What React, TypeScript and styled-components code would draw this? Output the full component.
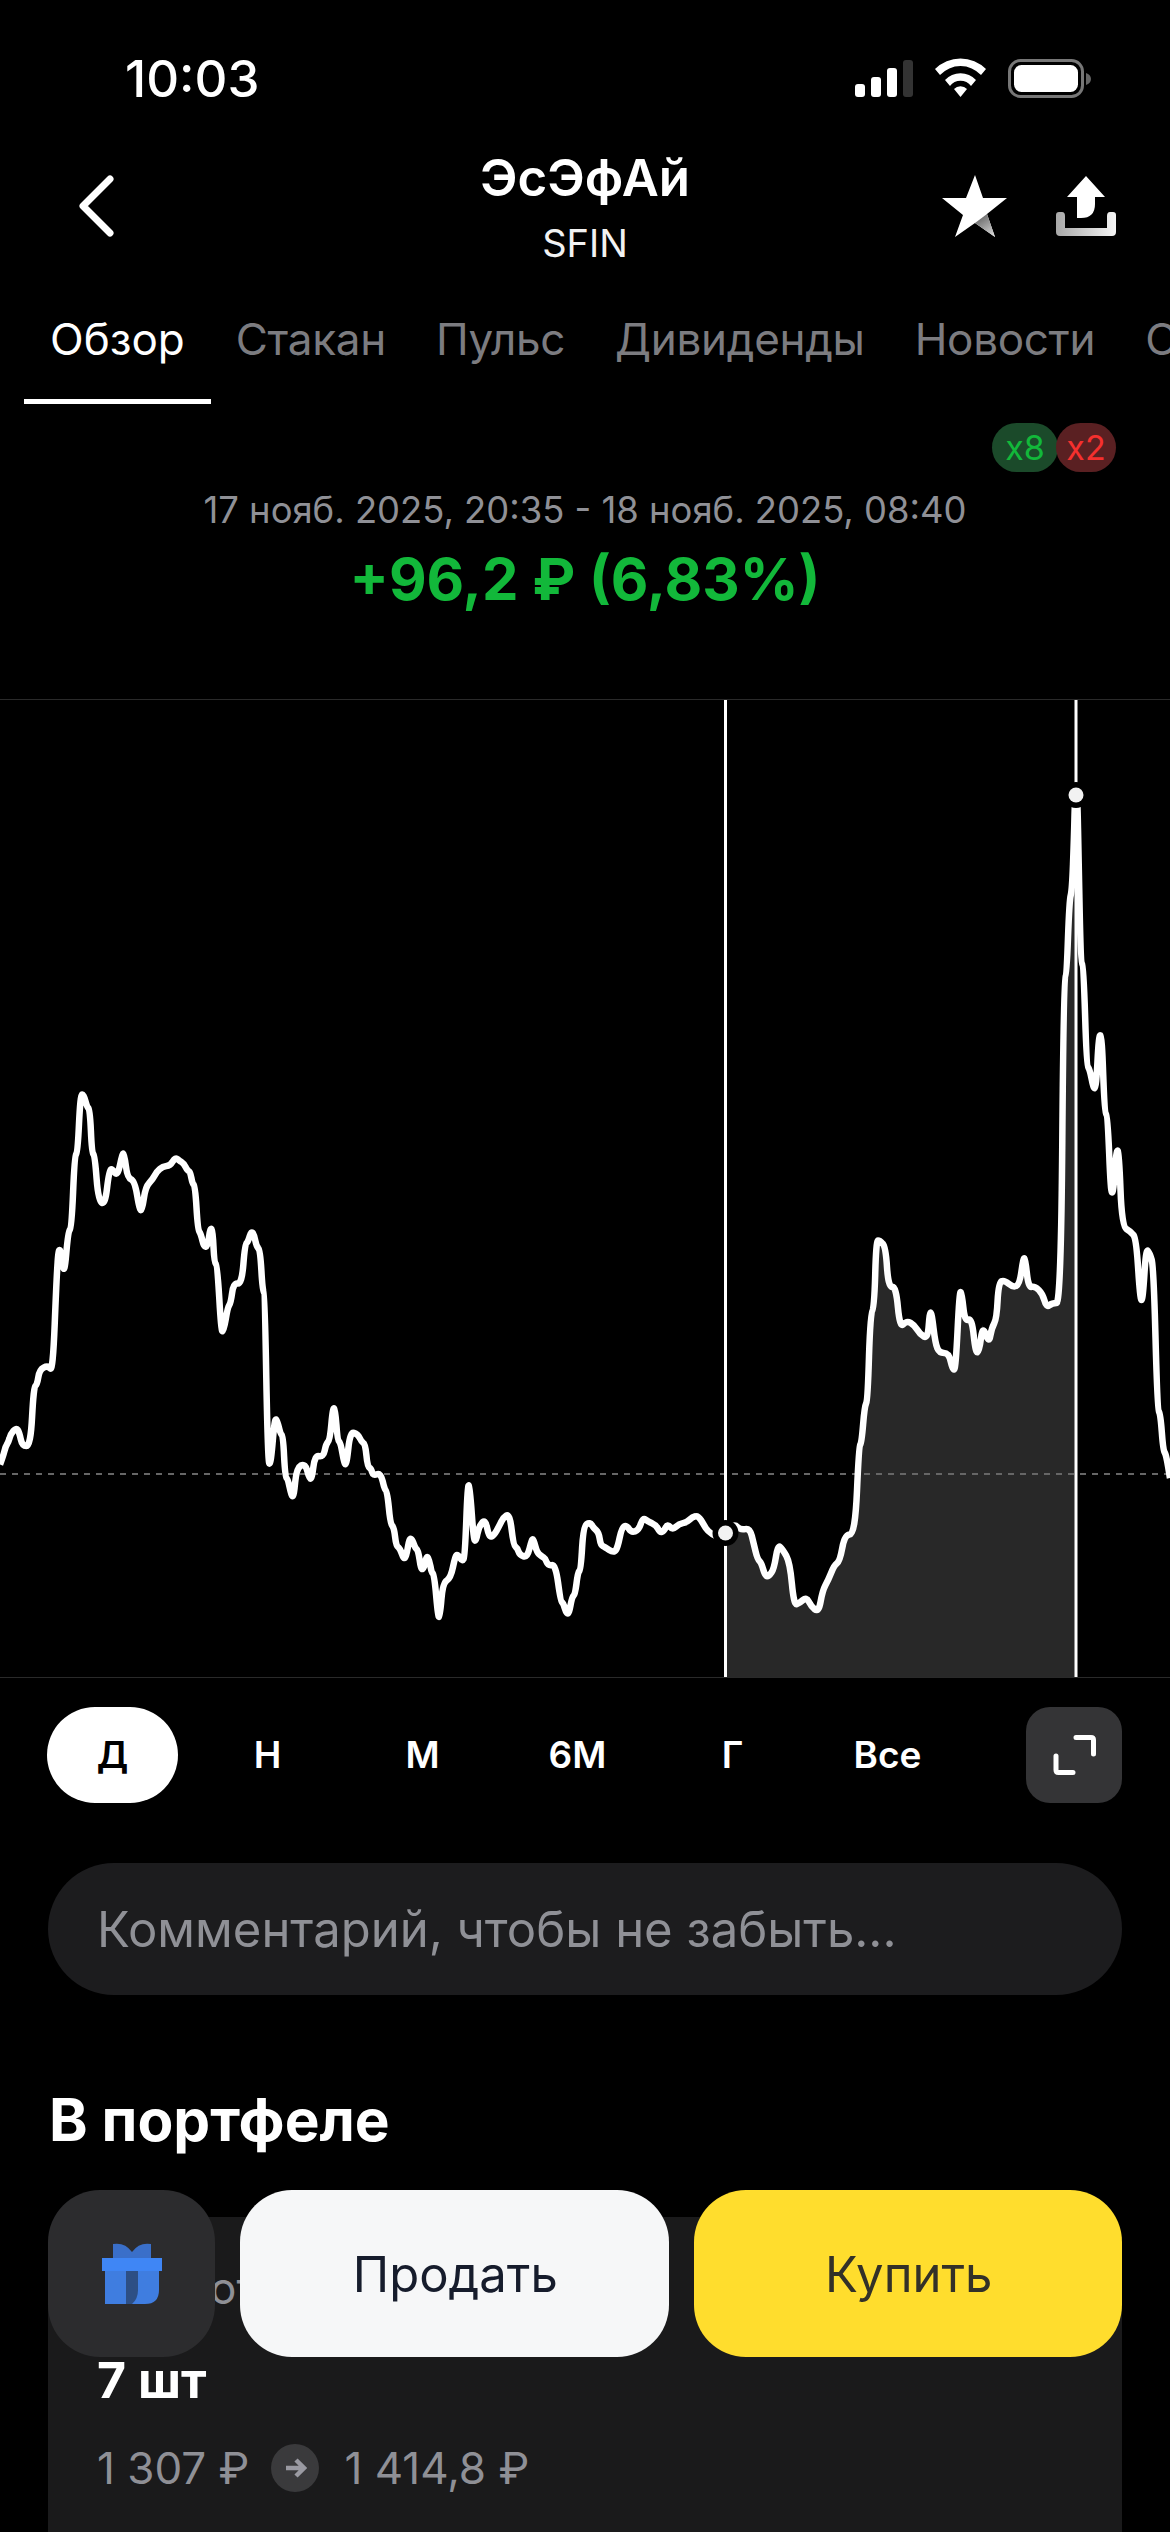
import React from 'react';
import styled, {createGlobalStyle} from 'styled-components';

const GlobalStyle = createGlobalStyle`
    html, body {
        margin: 0;
        padding: 0;
        background: #000;
    }
    body {
        font-family: Inter, "Noto Sans", "Liberation Sans", sans-serif;
        color: #fff;
    }
`;

const green = '#12b83a';
const red = '#f5302e';
const grey = '#8f9096';

const Screen = styled.div`
    position: relative;
    width: 1170px;
    height: 2532px;
    overflow: hidden;
    background: #000;
`;

const StatusBar = styled.div`
    height: 146px;
    padding: 10px 79px 0 125px;
    box-sizing: border-box;
    display: flex;
    justify-content: space-between;
    align-items: center;
`;

const Time = styled.div`
    font-size: 51px;
    font-weight: 500;
`;

const Header = styled.header`
    height: 124px;
    padding: 0 54px;
    display: grid;
    grid-template-columns: 1fr auto 1fr;
    align-items: center;
`;

const BackSlot = styled.div`
    padding-left: 24px;
    margin-top: -4px;
    display: flex;
`;

const HeaderIcons = styled.div`
    display: flex;
    justify-content: flex-end;
    gap: 48px;
    align-items: center;
    margin-top: -4px;
`;

const TitleBlock = styled.div`
    display: flex;
    flex-direction: column;
    align-items: center;
`;

const Title = styled.div`
    font-size: 51px;
    font-weight: 600;
    line-height: 58px;
`;

const Ticker = styled.div`
    font-size: 38px;
    line-height: 50px;
    margin-top: 11px;
    color: #f2f2f2;
`;

const Tabs = styled.nav`
    height: 134px;
    padding-left: 24px;
    display: flex;
    overflow: hidden;
`;

const Tab = styled.div<{$active?: boolean}>`
    padding: 9px ${props => (props.$active ? 26 : 25)}px 0;
    flex: none;
    display: flex;
    align-items: center;
    box-sizing: border-box;
    font-size: 44px;
    letter-spacing: ${props => (props.$active ? 0 : -0.3)}px;
    color: ${props => (props.$active ? '#fff' : '#7c7c80')};
    border-bottom: 5px solid ${props => (props.$active ? '#fff' : 'transparent')};
`;

const BadgeRow = styled.div`
    display: flex;
    justify-content: flex-end;
    box-sizing: border-box;
    padding: 19px 54px 0 0;
    height: 76px;
`;

const Badge = styled.div<{$kind: 'up' | 'down'}>`
    height: 49px;
    width: ${props => (props.$kind === 'up' ? 66 : 60)}px;
    margin-left: ${props => (props.$kind === 'up' ? 0 : -2)}px;
    border-radius: 25px;
    display: flex;
    align-items: center;
    justify-content: center;
    font-size: 34px;
    background: ${props => (props.$kind === 'up' ? '#1b4a2a' : '#5a2022')};
    color: ${props => (props.$kind === 'up' ? green : red)};
`;

const Period = styled.div`
    text-align: center;
    font-size: 36.4px;
    line-height: 44px;
    margin-top: 8px;
    color: ${grey};
`;

const Change = styled.div`
    text-align: center;
    font-size: 58px;
    font-weight: 700;
    line-height: 70px;
    margin-top: 12px;
    color: ${green};
`;

const ChartFrame = styled.div`
    margin-top: 85px;
    height: 979px;
    box-sizing: border-box;
    border-top: 1px solid #2a2a2a;
    border-bottom: 1px solid #2a2a2a;

    svg {
        display: block;
    }
`;

const Ranges = styled.div`
    margin-top: 29px;
    padding: 0 48px 0 35px;
    display: flex;
    align-items: center;
    height: 96px;
`;

const RangeItem = styled.div<{$active?: boolean}>`
    width: 155px;
    flex: none;
    display: flex;
    justify-content: center;
    font-size: 37px;
    font-weight: 600;
    line-height: 96px;
    color: ${props => (props.$active ? '#000' : '#fff')};

    span {
        width: 131px;
        text-align: center;
        border-radius: 48px;
        background: ${props => (props.$active ? '#fff' : 'transparent')};
    }
`;

const ExpandButton = styled.div`
    margin-left: auto;
    width: 96px;
    height: 96px;
    border-radius: 24px;
    background: #343436;
    display: flex;
    align-items: center;
    justify-content: center;
`;

const CommentField = styled.div`
    margin: 60px 48px 0;
    height: 132px;
    border-radius: 66px;
    background: #1c1c1e;
    padding-left: 49px;
    display: flex;
    align-items: center;
    font-size: 49px;
    color: ${grey};
`;

const SectionTitle = styled.h2`
    margin: 91px 0 0 49px;
    font-size: 58.5px;
    line-height: 68px;
    font-weight: 700;
`;

const PortfolioCard = styled.section`
    margin: 63px 48px 0;
    padding: 45px 49px 0;
    height: 400px;
    border-radius: 32px 32px 0 0;
    background: #1a1a1b;
`;

const CardLabel = styled.div`
    font-size: 44px;
    line-height: 52px;
    color: ${grey};
`;

const Quantity = styled.div`
    margin-top: 36px;
    font-size: 50px;
    font-weight: 700;
    line-height: 60px;
`;

const PriceRow = styled.div`
    margin-top: 34px;
    display: flex;
    align-items: center;
    gap: 22px;
    font-size: 44px;
    line-height: 48px;
    color: ${grey};
`;

const ArrowCircle = styled.div`
    width: 48px;
    height: 48px;
    margin-right: 3px;
    border-radius: 50%;
    background: #3a3a3c;
    display: flex;
    align-items: center;
    justify-content: center;
`;

const ActionBar = styled.div`
    position: absolute;
    left: 48px;
    right: 48px;
    top: 2190px;
    height: 167px;
    display: flex;
    gap: 25px;
`;

const GiftButton = styled.div`
    width: 167px;
    flex: none;
    border-radius: 52px;
    background: #2c2c2e;
    display: flex;
    align-items: center;
    justify-content: center;
`;

const ActionButton = styled.div<{$primary?: boolean}>`
    flex: 1;
    border-radius: 52px;
    padding: 2px 0 0 2px;
    display: flex;
    align-items: center;
    justify-content: center;
    font-size: 49px;
    background: ${props => (props.$primary ? '#ffdd2d' : '#f6f7f8')};
    color: ${props => (props.$primary ? '#333128' : '#161c2c')};
`;

// line traced from the reference, in crop coordinates of the two chart crops
const LEFT_TRACE = [
    [0, 1040], [8, 1020], [15, 995], [22, 985], [28, 965], [42, 950], [50, 960], [58, 995], [80, 995], [88, 850],
    [97, 845], [103, 808], [125, 797], [138, 813], [148, 580], [153, 510], [160, 520], [168, 580], [178, 470],
    [187, 460], [195, 285], [203, 275], [210, 135], [218, 132], [228, 165], [235, 170], [240, 275], [248, 285],
    [257, 395], [275, 403], [285, 320], [293, 315], [307, 335], [320, 277], [325, 280], [333, 338], [352, 345],
    [365, 418], [372, 415], [380, 360], [400, 340], [410, 322], [425, 310], [445, 308], [458, 287], [470, 297],
    [480, 302], [490, 320], [497, 322], [503, 352], [510, 357], [517, 465], [525, 475], [533, 508], [543, 505],
    [550, 458], [556, 470], [560, 545], [568, 552], [578, 715], [585, 712], [595, 655], [603, 645], [610, 595],
    [632, 598], [640, 500], [648, 495], [657, 467], [665, 480], [670, 505], [680, 515], [686, 615], [692, 620],
    [700, 1038], [708, 1038], [718, 925], [725, 935], [733, 965], [740, 970], [745, 1070], [752, 1075], [762, 1118],
    [768, 1118], [775, 1048], [798, 1037], [808, 1075], [815, 1075], [823, 1017], [845, 1022], [852, 990], [862, 980],
    [870, 900], [876, 905], [882, 980], [890, 987], [900, 1040], [906, 1038], [915, 960], [935, 965], [945, 985],
    [955, 990], [960, 1045], [970, 1050], [975, 1068], [995, 1060], [1005, 1102], [1012, 1105], [1020, 1185],
    [1030, 1195], [1035, 1240], [1045, 1245], [1055, 1272], [1062, 1265], [1070, 1220], [1078, 1225], [1085, 1245],
    [1093, 1250], [1100, 1297], [1108, 1295], [1115, 1262], [1122, 1275], [1128, 1305], [1135, 1310], [1145, 1415],
    [1150, 1412], [1157, 1330], [1178, 1318], [1190, 1262], [1198, 1262], [1208, 1278], [1215, 1265], [1222, 1088],
    [1228, 1095], [1238, 1228], [1245, 1225], [1250, 1195], [1268, 1172], [1278, 1218], [1290, 1215], [1305, 1190],
    [1315, 1170], [1332, 1160], [1342, 1238], [1352, 1245], [1358, 1262], [1378, 1268], [1390, 1222], [1395, 1225],
    [1403, 1255], [1415, 1265], [1425, 1270], [1432, 1288], [1452, 1285], [1465, 1375], [1472, 1380], [1480, 1405],
    [1487, 1405], [1495, 1365], [1503, 1358], [1510, 1305], [1518, 1297]
];

const RIGHT_TRACE = [
    [35, 1322], [52, 1315], [62, 1325], [75, 1332], [80, 1352], [90, 1355], [115, 1365], [125, 1355], [135, 1325],
    [148, 1320], [160, 1332], [180, 1328], [190, 1308], [205, 1315], [225, 1320], [235, 1332], [245, 1330], [255, 1318],
    [268, 1328], [285, 1318], [305, 1316], [320, 1307], [335, 1305], [350, 1320], [360, 1330], [385, 1340], [405, 1332],
    [430, 1318], [445, 1328], [470, 1325], [480, 1350], [490, 1375], [500, 1380], [510, 1402], [520, 1402], [533, 1390],
    [543, 1352], [555, 1358], [575, 1380], [585, 1448], [600, 1445], [618, 1435], [630, 1450], [650, 1460], [660, 1425],
    [675, 1408], [690, 1385], [705, 1378], [718, 1335], [745, 1335], [755, 1195], [762, 1188], [770, 1130], [778, 1120],
    [785, 980], [795, 975], [800, 865], [810, 865], [825, 875], [832, 940], [852, 938], [862, 1005], [880, 993],
    [900, 1000], [915, 1015], [935, 1022], [940, 980], [945, 980], [955, 1030], [965, 1045], [990, 1045], [1000, 1072],
    [1008, 1070], [1018, 945], [1024, 950], [1032, 995], [1050, 988], [1060, 1045], [1070, 1042], [1078, 1000],
    [1095, 1030], [1102, 1005], [1115, 990], [1120, 932], [1135, 928], [1158, 940], [1175, 935], [1185, 892], [1190, 895],
    [1198, 940], [1215, 938], [1235, 950], [1245, 972], [1260, 965], [1283, 965], [1290, 445], [1298, 440], [1305, 320],
    [1312, 305], [1317, 220], [1320, 150], [1326, 150], [1329, 260], [1335, 420], [1342, 425], [1350, 585], [1358, 590],
    [1368, 622], [1375, 620], [1382, 535], [1390, 538], [1397, 660], [1405, 665], [1413, 788], [1420, 788], [1428, 718],
    [1435, 725], [1442, 842], [1465, 850], [1480, 862], [1490, 960], [1497, 960], [1505, 878], [1515, 885], [1525, 905],
    [1535, 1135], [1543, 1142], [1550, 1200], [1558, 1208], [1568, 1245]
];

const CHART_TOP = 700;
const INNER_HEIGHT = 977;
const RANGE_START = 725.5;
const RANGE_END = 1076;
const START_DOT_Y = 833;
const END_DOT_Y = 95;

const linePoints = [
    ...LEFT_TRACE.map(([x, y]) => [x / 2.6133, 1040 + y / 2.45 - CHART_TOP]),
    ...RIGHT_TRACE.map(([x, y]) => [570 + x / 2.6133, 700 + y / 1.6 - CHART_TOP])
];

const toPolygon = (points: number[][]) => points.map(([x, y]) => `${x.toFixed(1)},${y.toFixed(1)}`).join(' ');

// rounds the corners by curving through the midpoints of the segments
function toSmoothPath(points: number[][]) {
    let path = `M${points[0][0].toFixed(1)} ${points[0][1].toFixed(1)}`;
    for (let i = 1; i < points.length - 1; i++) {
        const [x, y] = points[i];
        const [nx, ny] = points[i + 1];
        path += ` Q${x.toFixed(1)} ${y.toFixed(1)} ${((x + nx) / 2).toFixed(1)} ${((y + ny) / 2).toFixed(1)}`;
    }
    const last = points[points.length - 1];
    return `${path} L${last[0].toFixed(1)} ${last[1].toFixed(1)}`;
}

const areaPoints = [
    [RANGE_START, INNER_HEIGHT],
    [RANGE_START, START_DOT_Y],
    ...linePoints.filter(([x]) => x >= RANGE_START && x <= RANGE_END),
    [RANGE_END, END_DOT_Y],
    [RANGE_END, INNER_HEIGHT]
];

const Chart = () => (
    <svg width={1170} height={INNER_HEIGHT} viewBox={`0 0 1170 ${INNER_HEIGHT}`}>
        <polygon points={toPolygon(areaPoints)} fill="#282828" />
        <line x1={0} x2={1170} y1={774} y2={774} stroke="#666" strokeWidth={2} strokeDasharray="6 6" />
        <line x1={RANGE_START} x2={RANGE_START} y1={0} y2={INNER_HEIGHT} stroke="#fff" strokeWidth={3} />
        <line x1={RANGE_END} x2={RANGE_END} y1={0} y2={INNER_HEIGHT} stroke="#fff" strokeWidth={3} />
        <path d={toSmoothPath(linePoints)} fill="none" stroke="#fff" strokeWidth={6.5} strokeLinejoin="round" />
        <circle cx={RANGE_START} cy={START_DOT_Y} r={13} fill="#000" />
        <circle cx={RANGE_START} cy={START_DOT_Y} r={7.5} fill="#f2f2f2" />
        <circle cx={RANGE_END} cy={END_DOT_Y} r={13} fill="#000" />
        <circle cx={RANGE_END} cy={END_DOT_Y} r={7.5} fill="#f2f2f2" />
    </svg>
);

const StatusIcons = () => (
    <svg width={236} height={40} viewBox="0 0 236 40">
        <rect x={0} y={26} width={10} height={13} rx={3} fill="#fff" />
        <rect x={16} y={19} width={10} height={20} rx={3} fill="#fff" />
        <rect x={32} y={10} width={10} height={29} rx={3} fill="#fff" />
        <rect x={48} y={2} width={10} height={37} rx={3} fill="#333" />
        <path d="M80 11 A36 36 0 0 1 131 11 L126 17 A28 28 0 0 0 85 17 Z" fill="#fff" />
        <path d="M90 22 A21 21 0 0 1 121 22 L116 28 A13 13 0 0 0 95 28 Z" fill="#fff" />
        <path d="M99 31 A9 9 0 0 1 112 31 L105.5 39 Z" fill="#fff" />
        <rect x={154.5} y={2.5} width={73} height={36} rx={11} fill="none" stroke="#777" strokeWidth={3} />
        <rect x={159} y={7} width={64} height={27} rx={7.5} fill="#fff" />
        <path d="M231 15 C234 16 236 18 236 21 C236 24 234 26 231 27 Z" fill="#666" />
    </svg>
);

const BackIcon = () => (
    <svg width={36} height={62} viewBox="0 0 36 62">
        <path d="M32 4 L5 31 L32 58" fill="none" stroke="#fff" strokeWidth={7} strokeLinecap="round" strokeLinejoin="round" />
    </svg>
);

const StarIcon = () => (
    <svg width={66} height={62} viewBox="0 0 66 62">
        <defs>
            <linearGradient id="starShade" x1="0.2" y1="0" x2="0.8" y2="1">
                <stop offset="0" stopColor="#5e5e5e" />
                <stop offset="1" stopColor="#d6d6d6" />
            </linearGradient>
        </defs>
        <path d="M33 0 L41 23 L65 23 L45 39 L53 62 L33 48 L13 62 L21 40 L0 23 L24 23 Z" fill="#fff" />
        <path d="M33 48 L45 39 L53 62 Z" fill="url(#starShade)" />
    </svg>
);

const ShareIcon = () => (
    <svg width={60} height={60} viewBox="0 0 60 60">
        <defs>
            <linearGradient id="trayShade" x1="0" y1="0" x2="1" y2="0">
                <stop offset="0" stopColor="#a8a8a8" />
                <stop offset="1" stopColor="#f5f5f5" />
            </linearGradient>
        </defs>
        <path
            d="M0 39 Q0 36 3 36 L6 36 Q9 36 9 40 L9 52 L51 52 L51 40 Q51 36 54 36 L57 36 Q60 36 60 39 L60 56 Q60 60 56 60 L4 60 Q0 60 0 56 Z"
            fill="url(#trayShade)"
        />
        <path d="M30 0 L49 21 L39 21 L39 28 Q39 42 25 42 L21 42 L21 21 L11 21 Z" fill="#fff" />
    </svg>
);

const ExpandIcon = () => (
    <svg width={44} height={44} viewBox="0 0 44 44">
        <path
            d="M24 4.5 L39 4.5 Q41.5 4.5 41.5 7 L41.5 21 M4 23 L4 37 Q4 39.5 6.5 39.5 L21 39.5"
            fill="none"
            stroke="#fff"
            strokeWidth={5}
            strokeLinecap="round"
        />
    </svg>
);

const GiftIcon = () => (
    <svg width={60} height={61} viewBox="0 0 60 61">
        <path d="M11 1 Q23 -1 30 9 Q37 -1 49 1 L49 16 L11 16 Z" fill="#3a6fc9" />
        <path d="M3 28 L57 28 L57 47 Q57 61 43 61 L3 61 Z" fill="#3f7de0" />
        <path d="M24 28 L36 28 L36 47 Q36 56 30 61 L24 61 Z" fill="#2d4f85" />
        <rect x={0} y={15} width={60} height={13} fill="#3f86f5" />
    </svg>
);

const ArrowIcon = () => (
    <svg width={24} height={24} viewBox="0 0 24 24">
        <path d="M3 12 L20 12 M13 4 L21 12 L13 20" fill="none" stroke="#9a9aa2" strokeWidth={4.5} />
    </svg>
);

const TABS = ['Обзор', 'Стакан', 'Пульс', 'Дивиденды', 'Новости', 'События'];
const RANGES = ['Д', 'Н', 'М', '6М', 'Г', 'Все'];

export default function App() {
    return (
        <Screen>
            <GlobalStyle />
            <StatusBar>
                <Time>10:03</Time>
                <StatusIcons />
            </StatusBar>
            <Header>
                <BackSlot>
                    <BackIcon />
                </BackSlot>
                <TitleBlock>
                    <Title>ЭсЭфАй</Title>
                    <Ticker>SFIN</Ticker>
                </TitleBlock>
                <HeaderIcons>
                    <StarIcon />
                    <ShareIcon />
                </HeaderIcons>
            </Header>
            <Tabs>
                {TABS.map((tab, index) => (
                    <Tab key={tab} $active={index === 0}>
                        {tab}
                    </Tab>
                ))}
            </Tabs>
            <BadgeRow>
                <Badge $kind="up">x8</Badge>
                <Badge $kind="down">x2</Badge>
            </BadgeRow>
            <Period>17 нояб. 2025, 20:35 - 18 нояб. 2025, 08:40</Period>
            <Change>+96,2 ₽ (6,83%)</Change>
            <ChartFrame>
                <Chart />
            </ChartFrame>
            <Ranges>
                {RANGES.map((range, index) => (
                    <RangeItem key={range} $active={index === 0}>
                        <span>{range}</span>
                    </RangeItem>
                ))}
                <ExpandButton>
                    <ExpandIcon />
                </ExpandButton>
            </Ranges>
            <CommentField>Комментарий, чтобы не забыть...</CommentField>
            <SectionTitle>В портфеле</SectionTitle>
            <PortfolioCard>
                <CardLabel>Оборот</CardLabel>
                <Quantity>7 шт</Quantity>
                <PriceRow>
                    <span>1 307 ₽</span>
                    <ArrowCircle>
                        <ArrowIcon />
                    </ArrowCircle>
                    <span>1 414,8 ₽</span>
                </PriceRow>
            </PortfolioCard>
            <ActionBar>
                <GiftButton>
                    <GiftIcon />
                </GiftButton>
                <ActionButton>Продать</ActionButton>
                <ActionButton $primary>Купить</ActionButton>
            </ActionBar>
        </Screen>
    );
}
